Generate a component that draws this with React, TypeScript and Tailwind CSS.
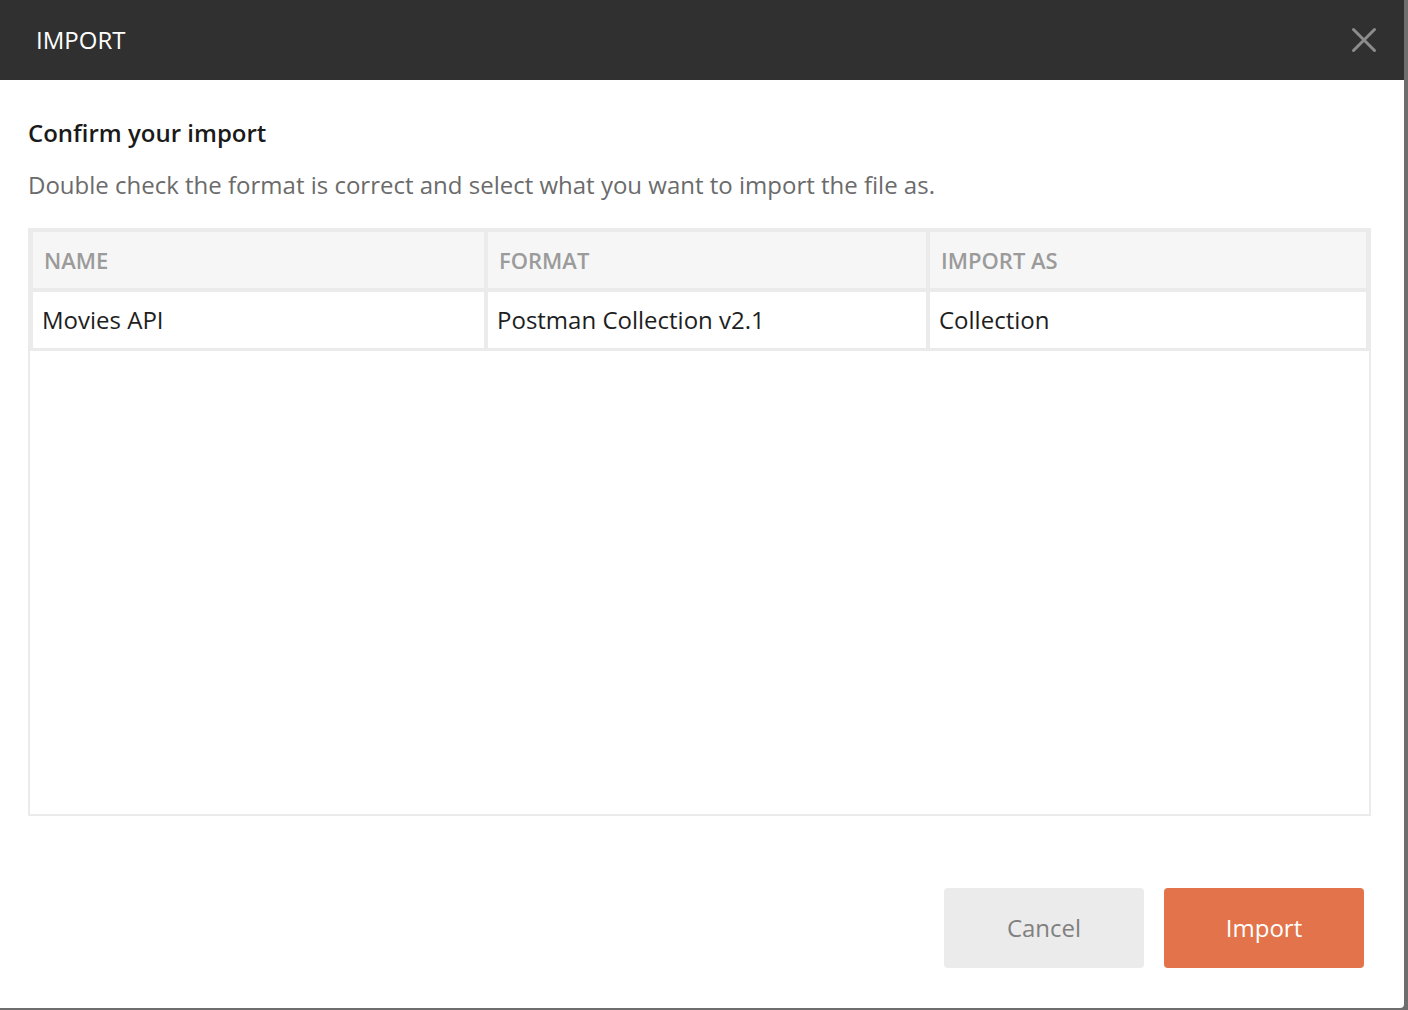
import React from "react";

const cols = ["NAME", "FORMAT", "IMPORT AS"];
const row = ["Movies API", "Postman Collection v2.1", "Collection"];

function CloseIcon() {
  return (
    <svg width="26" height="26" viewBox="0 0 26 26" className="text-[#8c8c8c]">
      <path d="M2.5 2.5 L23.5 23.5 M23.5 2.5 L2.5 23.5" stroke="currentColor" strokeWidth="3" strokeLinecap="round" />
    </svg>
  );
}

function App() {
  return (
    <div
      className="w-[1408px] h-[1010px] bg-[#6e6e6e] overflow-hidden"
      style={{ fontFamily: '"Open Sans", "Noto Sans", sans-serif' }}
    >
      <div className="w-[1404px] h-[1008px] bg-white rounded-br-[4px] flex flex-col">
        <div className="h-[80px] shrink-0 bg-[#303030] flex items-center justify-between pl-[36px] pr-[27px]">
          <span className="text-white text-[24px]">IMPORT</span>
          <button type="button" className="flex items-center">
            <CloseIcon />
          </button>
        </div>

        <div className="flex-1 flex flex-col px-[28px] pt-[34px]">
          <h2 className="text-[24px] font-semibold text-[#1a1a1a] leading-[38px]">
            Confirm your import
          </h2>
          <p className="text-[24px] text-[#6b6b6b] leading-[38px] mt-[14px]">
            Double check the format is correct and select what you want to import the file as.
          </p>

          <div className="mt-[24px] w-[1343px] h-[588px] border-2 border-[#ebebeb] flex flex-col">
            <div className="bg-[#ebebeb] px-[3px] pt-[2px] pb-[3px] grid grid-cols-[451px_438px_436px] gap-[4px]">
              {cols.map((c) => (
                <div
                  key={c}
                  className="bg-[#f6f6f6] h-[56px] flex items-center px-[11px] text-[22px] font-semibold text-[#9b9b9b]"
                >
                  {c}
                </div>
              ))}
              {row.map((c) => (
                <div
                  key={c}
                  className="bg-white h-[56px] flex items-center px-[9px] text-[24px] text-[#1e1e1e]"
                >
                  {c}
                </div>
              ))}
            </div>
            <div className="flex-1 bg-white" />
          </div>

          <div className="flex justify-end gap-[20px] mt-[72px] pr-[12px]">
            <button
              type="button"
              className="w-[200px] h-[80px] rounded-[4px] bg-[#ebebeb] text-[24px] text-[#808080]"
            >
              Cancel
            </button>
            <button
              type="button"
              className="w-[200px] h-[80px] rounded-[4px] bg-[#e2734a] text-[24px] text-white"
            >
              Import
            </button>
          </div>
        </div>
      </div>
    </div>
  );
}

export default App;
